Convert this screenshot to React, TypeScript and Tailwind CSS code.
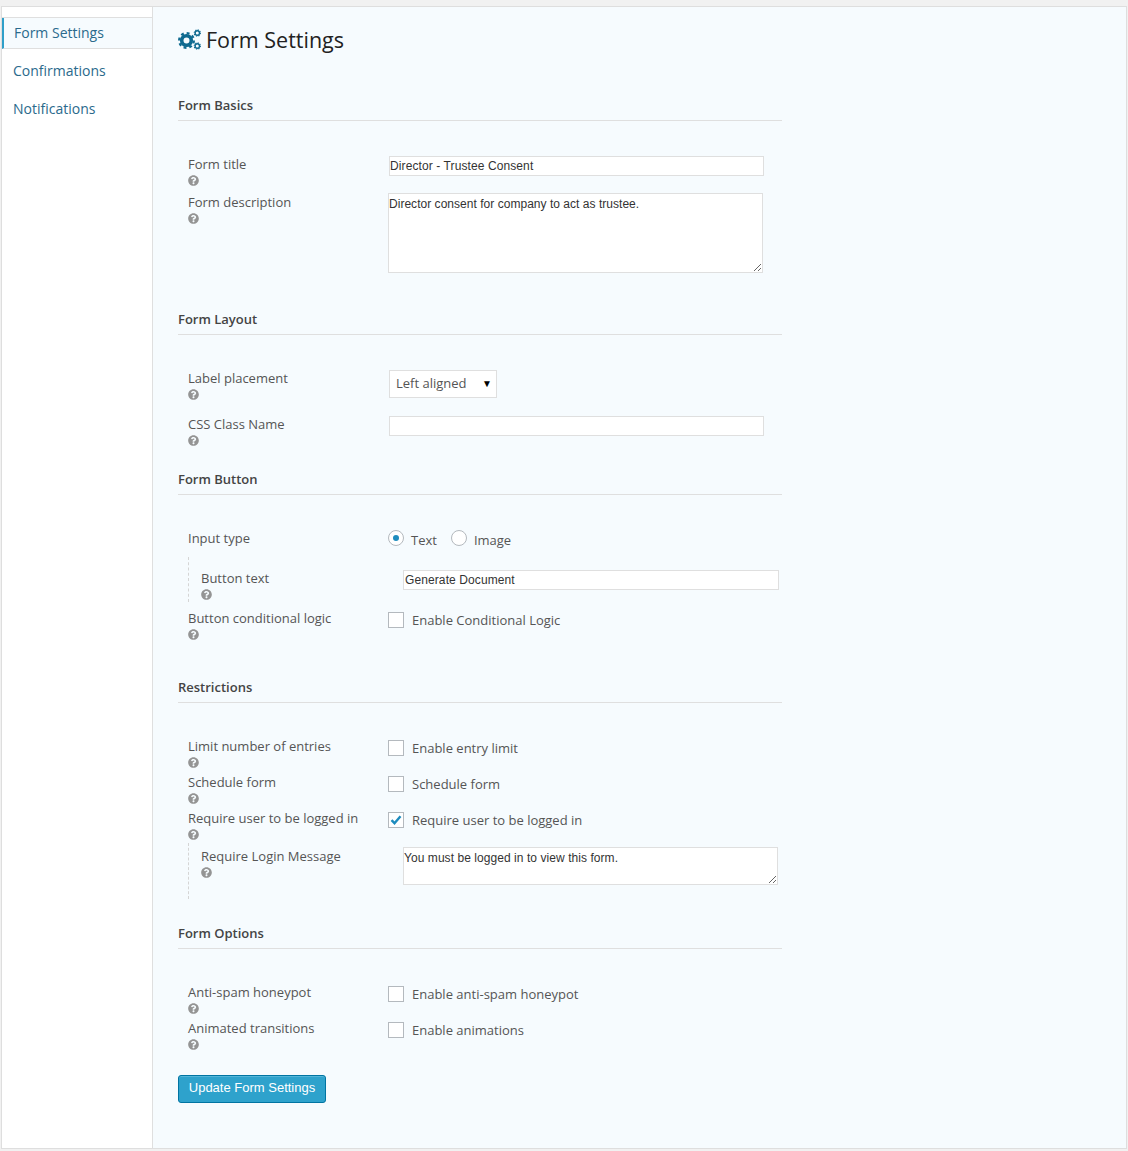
import { ReactNode } from "react";
import { FaQuestionCircle } from "react-icons/fa";

function Heading({ children }: { children: ReactNode }) {
  return (
    <div className="h-[26px] w-[604px] border-b border-[#dfdfdf] text-[13px] leading-[20px] font-semibold text-[#444]">
      {children}
    </div>
  );
}

function Row({ label, className, labelWidth = "w-[200px]", children }: { label: string; className: string; labelWidth?: string; children?: ReactNode }) {
  return (
    <div className={`flex ${className}`}>
      <div className={`${labelWidth} shrink-0 text-[13px] leading-[18px] text-[#555]`}>
        <div>{label}</div>
        <FaQuestionCircle className="mt-[2px] text-[11px] text-[#949494]" />
      </div>
      {children}
    </div>
  );
}

function Check({ label, checked }: { label: string; checked?: boolean }) {
  return (
    <label className="mt-[3px] flex h-[16px] items-center self-start text-[13px] leading-[16px] text-[#555]">
      <span className="relative mr-[8px] h-[16px] w-[16px]">
        <input type="checkbox" defaultChecked={checked} className="block h-[16px] w-[16px] appearance-none border border-[#b4b9be] bg-white" />
        {checked && (
          <svg viewBox="0 0 16 16" className="absolute top-0 left-0 h-[16px] w-[16px] text-[#1e8cbe]" fill="none" stroke="currentColor" strokeWidth="2.4">
            <path d="M3.5 8.2l3 3 6-7" />
          </svg>
        )}
      </span>
      {label}
    </label>
  );
}

function Radio({ label, checked }: { label: string; checked?: boolean }) {
  return (
    <label className="mt-px mr-[14px] flex h-[16px] items-center self-start text-[13px] leading-[18px] text-[#555]">
      <span className="relative mr-[7px] h-[16px] w-[16px]">
        <input type="radio" name="input-type" defaultChecked={checked} className="block h-[16px] w-[16px] appearance-none rounded-full border border-[#b4b9be] bg-white" />
        {checked && <span className="absolute top-[5px] left-[5px] h-[6px] w-[6px] rounded-full bg-[#1e8cbe]" />}
      </span>
      <span className="mt-[4px]">{label}</span>
    </label>
  );
}

function Gears() {
  return (
    <svg viewBox="0 0 23 21" className="mr-[5px] h-[21px] w-[23px] text-[#0f6a90]" fill="none" stroke="currentColor">
      <circle cx="8.5" cy="11.5" r="4.8" strokeWidth="3.6" />
      <circle cx="8.5" cy="11.5" r="7.4" strokeWidth="2.2" strokeDasharray="2.9 2.9" />
      <circle cx="19.3" cy="4" r="2.2" strokeWidth="1.4" />
      <circle cx="19.3" cy="4" r="3.1" strokeWidth="1.1" strokeDasharray="1.2 1.23" />
      <circle cx="19.3" cy="17" r="2.2" strokeWidth="1.4" />
      <circle cx="19.3" cy="17" r="3.1" strokeWidth="1.1" strokeDasharray="1.2 1.23" />
    </svg>
  );
}

const field = "block border border-[#dfdfdf] bg-white font-['Liberation_Sans',sans-serif] text-[12px] text-[#333] outline-none";

export default function App() {
  return (
    <div className="h-[1151px] overflow-hidden bg-[#f1f1f1] px-px pt-[6px] font-['Open_Sans',sans-serif]">
      <div className="flex h-[1143px] border border-[#dedede] bg-[#f6fbfe]">
        <nav className="w-[151px] shrink-0 border-r border-[#dfdfdf] bg-white text-[14px] text-[#2a6a8c]">
          <div className="h-[11px] border-b border-[#dfdfdf]" />
          <div className="flex h-[31px] items-center border-b border-l-2 border-[#dfdfdf] border-l-[#2e9fc9] bg-[#f6fbfe] pb-[2px] pl-[10px]">Form Settings</div>
          <div className="mt-[3px] flex h-[38px] items-center pb-[2px] pl-[11px]">Confirmations</div>
          <div className="flex h-[38px] items-center pb-[2px] pl-[11px]">Notifications</div>
        </nav>

        <main className="flex-1 pl-[25px]">
          <div className="flex h-[88px] items-start pt-[22px]">
            <Gears />
            <h1 className="-mt-px text-[21.5px] leading-[24px] text-[#222]">Form Settings</h1>
          </div>

          <section className="mb-[36px]">
            <Heading>Form Basics</Heading>
            <div className="mt-[34px] pl-[10px]">
              <Row label="Form title" className="h-[38px]">
                <input defaultValue="Director - Trustee Consent" className={`${field} mt-px ml-px h-[20px] w-[375px] tracking-[0.1px]`} />
              </Row>
              <Row label="Form description" className="h-[80px]">
                <textarea defaultValue="Director consent for company to act as trustee." className={`${field} h-[80px] w-[375px] pt-px tracking-[0.03px]`} />
              </Row>
            </div>
          </section>

          <section className="mb-[8px]">
            <Heading>Form Layout</Heading>
            <div className="mt-[34px] pl-[10px]">
              <Row label="Label placement" className="h-[46px]">
                <div className="relative mt-px ml-px h-[28px] w-[108px]">
                  <select defaultValue="Left aligned" className="h-[28px] w-full appearance-none border border-[#dfdfdf] bg-white pl-[6px] text-[13px] text-[#555] outline-none">
                    <option>Left aligned</option>
                  </select>
                  <span className="absolute top-[6px] right-[5px] text-[10px] text-black">▼</span>
                </div>
              </Row>
              <Row label="CSS Class Name" className="h-[46px]">
                <input className={`${field} mt-px ml-px h-[20px] w-[375px]`} />
              </Row>
            </div>
          </section>

          <section className="mb-[28px]">
            <Heading>Form Button</Heading>
            <div className="mt-[34px] pl-[10px]">
              <div className="flex h-[28px]">
                <div className="w-[200px] text-[13px] leading-[18px] text-[#555]">Input type</div>
                <div className="flex">
                  <Radio label="Text" checked />
                  <Radio label="Image" />
                </div>
              </div>
              <div className="mb-[7px] h-[45px] border-l border-dashed border-[#d5d5d5] pt-[12px] pl-[12px]">
                <Row label="Button text" labelWidth="w-[202px]" className="h-[33px]">
                  <input defaultValue="Generate Document" className={`${field} mt-px h-[20px] w-[376px] pl-px tracking-[0.1px]`} />
                </Row>
              </div>
              <Row label="Button conditional logic" className="h-[40px]">
                <Check label="Enable Conditional Logic" />
              </Row>
            </div>
          </section>

          <section className="mb-[24px]">
            <Heading>Restrictions</Heading>
            <div className="mt-[34px] pl-[10px]">
              <Row label="Limit number of entries" className="h-[36px]">
                <Check label="Enable entry limit" />
              </Row>
              <Row label="Schedule form" className="h-[36px]">
                <Check label="Schedule form" />
              </Row>
              <Row label="Require user to be logged in" className="h-[34px]">
                <Check label="Require user to be logged in" checked />
              </Row>
              <div className="h-[56px] border-l border-dashed border-[#d5d5d5] pt-[4px] pl-[12px]">
                <Row label="Require Login Message" labelWidth="w-[202px]" className="h-[38px]">
                  <textarea defaultValue="You must be logged in to view this form." className={`${field} h-[38px] w-[375px] pt-px tracking-[0.06px]`} />
                </Row>
              </div>
            </div>
          </section>

          <section>
            <Heading>Form Options</Heading>
            <div className="mt-[34px] pl-[10px]">
              <Row label="Anti-spam honeypot" className="h-[36px]">
                <Check label="Enable anti-spam honeypot" />
              </Row>
              <Row label="Animated transitions" className="h-[56px]">
                <Check label="Enable animations" />
              </Row>
            </div>
          </section>

          <button className="block h-[28px] w-[148px] rounded-[3px] border border-[#0074a2] bg-[#2ea2cc] pb-[2px] font-['Liberation_Sans',sans-serif] text-[13px] text-white shadow-[inset_0_1px_0_rgba(120,200,230,0.5)]">
            Update Form Settings
          </button>
        </main>
      </div>
    </div>
  );
}
